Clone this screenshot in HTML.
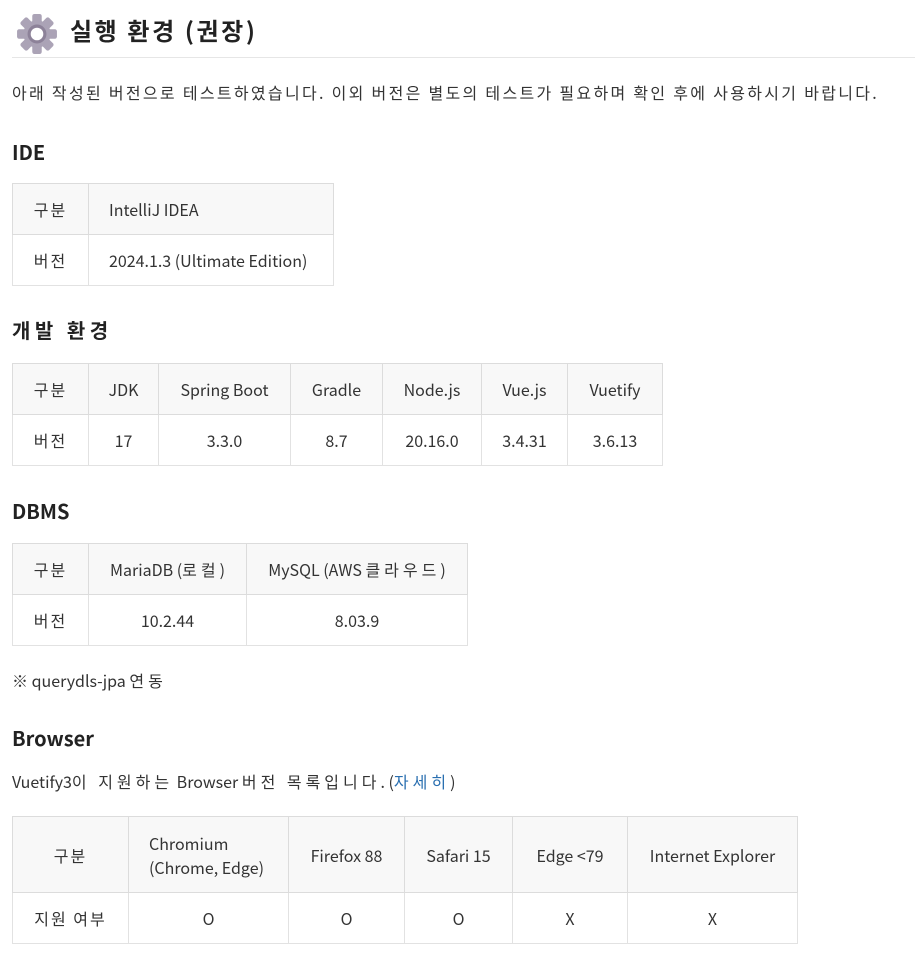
<!DOCTYPE html>
<html><head><meta charset="utf-8"><style>
body{margin:0;width:915px;height:961px;background:#fff;color:#333;font-family:"Noto Sans CJK KR","Liberation Sans",sans-serif;font-size:16px;position:relative;overflow:hidden}
.a{position:absolute;white-space:nowrap}
h1{position:absolute;left:70px;top:12px;margin:0;font-size:24px;font-weight:bold;line-height:36px;color:#222;letter-spacing:2.6px}
h2{position:absolute;left:12px;margin:0;font-size:20px;font-weight:bold;line-height:28px;color:#222}
table{position:absolute;left:12px;border-collapse:collapse;table-layout:fixed}
td{border:1px solid #e2e2e2;text-align:center;padding:0;height:50px;line-height:24px}
tr:first-child td{background:#f8f8f8;border-color:#dcdcdc}
a{color:#2a6fb0;text-decoration:none}
.k{letter-spacing:4px}
.k2{letter-spacing:2px}
</style></head><body>
<svg class="a" style="left:16px;top:13px" width="42" height="42" viewBox="0 0 40 40">
<g fill="#aba3b6" transform="translate(20,20)">
<rect x="-4.5" y="-19" width="9" height="10" rx="2"/>
<rect x="-4.5" y="-19" width="9" height="10" rx="2" transform="rotate(45)"/>
<rect x="-4.5" y="-19" width="9" height="10" rx="2" transform="rotate(90)"/>
<rect x="-4.5" y="-19" width="9" height="10" rx="2" transform="rotate(135)"/>
<rect x="-4.5" y="-19" width="9" height="10" rx="2" transform="rotate(180)"/>
<rect x="-4.5" y="-19" width="9" height="10" rx="2" transform="rotate(225)"/>
<rect x="-4.5" y="-19" width="9" height="10" rx="2" transform="rotate(270)"/>
<rect x="-4.5" y="-19" width="9" height="10" rx="2" transform="rotate(315)"/>
<circle r="13"/></g>
<circle cx="20" cy="20" r="7.5" fill="#fff" stroke="#8d8299" stroke-width="3"/>
</svg>
<h1>실행 환경 (권장)</h1>
<div class="a" style="left:12px;top:57px;width:903px;height:1px;background:#e6e6e6"></div>
<div class="a" style="left:12px;top:80px;line-height:24px;letter-spacing:2.3px">아래 작성된 버전으로 테스트하였습니다. 이외 버전은 별도의 테스트가 필요하며 확인 후에 사용하시기 바랍니다.</div>
<h2 style="top:138px">IDE</h2>
<table style="top:183px"><colgroup><col style="width:76px"><col style="width:245px"></colgroup>
<tr><td><span class="k2">구분</span></td><td style="text-align:left;padding-left:20px">IntelliJ IDEA</td></tr>
<tr><td><span class="k2">버전</span></td><td style="text-align:left;padding-left:20px">2024.1.3 (Ultimate Edition)</td></tr></table>
<h2 style="top:316px;letter-spacing:4.5px">개발 환경</h2>
<table style="top:363px"><colgroup><col style="width:76px"><col style="width:70px"><col style="width:132px"><col style="width:92px"><col style="width:99px"><col style="width:86px"><col style="width:95px"></colgroup>
<tr><td><span class="k2">구분</span></td><td>JDK</td><td>Spring Boot</td><td>Gradle</td><td>Node.js</td><td>Vue.js</td><td>Vuetify</td></tr>
<tr><td><span class="k2">버전</span></td><td>17</td><td>3.3.0</td><td>8.7</td><td>20.16.0</td><td>3.4.31</td><td>3.6.13</td></tr></table>
<h2 style="top:497px">DBMS</h2>
<table style="top:543px"><colgroup><col style="width:76px"><col style="width:158px"><col style="width:221px"></colgroup>
<tr><td><span class="k2">구분</span></td><td>MariaDB (<span class="k">로컬</span>)</td><td>MySQL (AWS <span class="k">클라우드</span>)</td></tr>
<tr><td><span class="k2">버전</span></td><td>10.2.44</td><td>8.03.9</td></tr></table>
<div class="a" style="left:12px;top:668px;line-height:24px">※ querydls-jpa <span class="k">연동</span></div>
<h2 style="top:724px">Browser</h2>
<div class="a" style="left:12px;top:769px;line-height:24px">Vuetify3<span class="k">이 지원하는</span> Browser <span class="k">버전 목록입니다</span>. (<a class="k">자세히</a>)</div>
<table style="top:816px"><colgroup><col style="width:116px"><col style="width:160px"><col style="width:116px"><col style="width:108px"><col style="width:115px"><col style="width:170px"></colgroup>
<tr><td style="height:75px"><span class="k2">구분</span></td><td style="text-align:left;padding-left:20px">Chromium<br>(Chrome, Edge)</td><td>Firefox 88</td><td>Safari 15</td><td>Edge &lt;79</td><td>Internet Explorer</td></tr>
<tr><td><span class="k2">지원 여부</span></td><td>O</td><td>O</td><td>O</td><td>X</td><td>X</td></tr></table>
</body></html>
